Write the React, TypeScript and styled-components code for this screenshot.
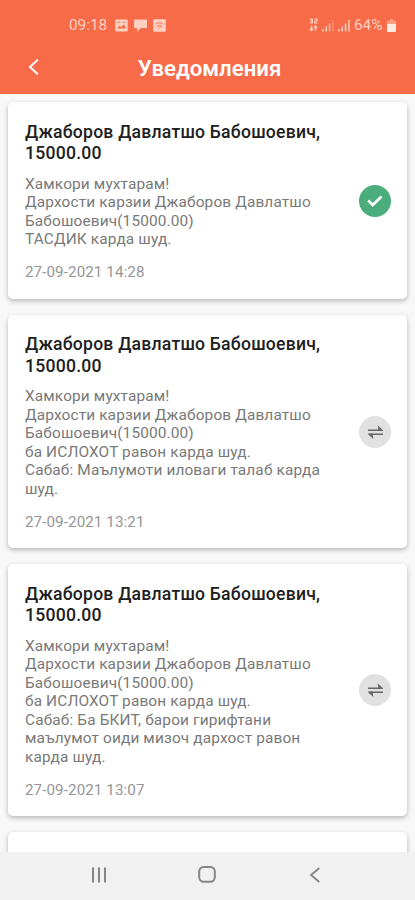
import React from "react";
import styled, { createGlobalStyle } from "styled-components";

const GlobalStyle = createGlobalStyle`
  * { box-sizing: border-box; }
  body { margin: 0; background: #f8f8f8; font-family: Roboto, "Noto Sans", sans-serif; }
`;

const Screen = styled.div`
  width: 415px;
  height: 900px;
  display: flex;
  flex-direction: column;
  overflow: hidden;
  background: #f8f8f8;
`;

const Header = styled.header`
  flex: none;
  height: 94px;
  background: #f76b49;
  color: #fff;
  display: flex;
  flex-direction: column;
`;

const StatusBar = styled.div`
  height: 42px;
  padding: 8px 19px 0 69px;
  display: flex;
  align-items: center;
  justify-content: space-between;
  color: #ffd0c2;
`;

const StatusGroup = styled.div<{ $gap: number }>`
  display: flex;
  align-items: center;
  gap: ${(p) => p.$gap}px;
`;

const StatusText = styled.span<{ $width: number }>`
  width: ${(p) => p.$width}px;
  font-size: 15.3px;
  line-height: 18px;
  white-space: nowrap;
`;

const TitleBar = styled.div`
  height: 50px;
  display: grid;
  grid-template-columns: 66px 1fr 62px;
  align-items: center;
`;

const BackButton = styled.button`
  border: 0;
  padding: 0 0 0 27px;
  background: none;
  color: #fff;
  height: 48px;
  display: flex;
  align-items: center;
`;

const PageTitle = styled.h1`
  margin: 2px 0 0;
  text-align: center;
  font-size: 22.2px;
  line-height: 26px;
  font-weight: 600;
  white-space: nowrap;
`;

const List = styled.main`
  flex: 1;
  min-height: 0;
  overflow: hidden;
  padding: 8px 8px 0;
  display: flex;
  flex-direction: column;
  gap: 16px;
`;

const Card = styled.article<{ $height: number }>`
  flex: none;
  height: ${(p) => p.$height}px;
  padding: 19.500px 16px 0 17px;
  display: flex;
  align-items: stretch;
  justify-content: space-between;
  background: #fff;
  border-radius: 5px;
  box-shadow: 0 2px 5px rgba(0, 0, 0, 0.27);
`;

const Content = styled.div`
  width: 310px;
  white-space: nowrap;
`;

const CardTitle = styled.h2`
  margin: 0 0 10px;
  color: #202020;
  font-size: 17.6px;
  line-height: 21.5px;
  font-weight: 500;
  letter-spacing: 0.23px;
`;

const Line = styled.span`
  display: block;
`;

const Body = styled.p`
  margin: 0 0 14.500px;
  color: #797979;
  font-size: 15.4px;
  line-height: 18.5px;
  letter-spacing: 0.14px;
`;

const DateText = styled.time`
  display: block;
  color: #969696;
  font-size: 15.2px;
  line-height: 19px;
  letter-spacing: 0.08px;
`;

const Status = styled.div<{ $approved: boolean }>`
  align-self: center;
  margin-top: -19px;
  width: 32px;
  height: 32px;
  border-radius: 50%;
  display: grid;
  place-items: center;
  background: ${(p) => (p.$approved ? "#4bad7b" : "#e1e1e1")};
`;

const NavBar = styled.nav`
  flex: none;
  height: 48px;
  background: #f1f1f1;
  color: #858585;
  display: flex;
  align-items: center;
  justify-content: space-between;
  padding: 0 92px 3px 91px;
`;

type Notice = { height: number; lines: string[]; date: string; approved: boolean };

const greeting = ["Хамкори мухтарам!", "Дархости карзии Джаборов Давлатшо", "Бабошоевич(15000.00)"];

const notices: Notice[] = [
  { height: 196.5, approved: true, lines: [...greeting, "ТАСДИК карда шуд."], date: "27-09-2021 14:28" },
  {
    height: 233.5,
    approved: false,
    lines: [...greeting, "ба ИСЛОХОТ равон карда шуд.", "Сабаб: Маълумоти иловаги талаб карда", "шуд."],
    date: "27-09-2021 13:21",
  },
  {
    height: 251.5,
    approved: false,
    lines: [
      ...greeting,
      "ба ИСЛОХОТ равон карда шуд.",
      "Сабаб: Ба БКИТ, барои гирифтани",
      "маълумот оиди мизоч дархост равон",
      "карда шуд.",
    ],
    date: "27-09-2021 13:07",
  },
];

const PhotoIcon = () => (
  <svg width="13" height="13" viewBox="0 0 13 13">
    <rect x=".3" y=".5" width="12.4" height="12" rx="1" fill="currentColor" />
    <path d="M2 9.5 4.5 6.5 6.3 8.3 8.8 5.2 11.2 9.5Z" fill="#f76b49" />
    <path d="M2.3 3.2h3M8 3.5h2" stroke="#f76b49" />
  </svg>
);

const ChatIcon = () => (
  <svg width="13" height="13" viewBox="0 0 13 13">
    <path d="M1 0.5h11a1 1 0 0 1 1 1V8a1 1 0 0 1-1 1H7L3 13V9H1a1 1 0 0 1-1-1V1.500a1 1 0 0 1 1-1Z" fill="currentColor" />
  </svg>
);

const CastIcon = () => (
  <svg width="13" height="13" viewBox="0 0 13 13">
    <rect x=".2" y=".3" width="12.6" height="12.4" rx="1.2" fill="currentColor" />
    <path d="M2.5 5.2Q6.5 2 10.500 5.200M4.300 7Q6.500 5.300 8.700 7L6.500 9.200Z" fill="none" stroke="#f76b49" strokeWidth=".9" />
  </svg>
);

const DataIcon = () => (
  <svg width="9" height="14" viewBox="0 0 9 14" fill="none" stroke="currentColor">
    <path d="M.8 1h2.500v4H.8M1 3h2M5.500 1h2.500v2H5.700v2H8.500" strokeWidth="1.200" />
    <path d="M2.500 7.500v5M.8 10.800l1.700 1.700 1.500-1.700M6.500 13V8M4.900 9.700 6.500 8l1.700 1.700" strokeWidth="1.300" />
  </svg>
);

const SignalIcon = ({ weak }: { weak?: boolean }) => (
  <svg width="12" height="13" viewBox="0 0 12 13" stroke="currentColor" strokeWidth="1.6">
    <path d="M1 10v2.500M4.300 7.500v5" />
    <path d="M7.600 4.500v8" opacity={weak ? 0.75 : 1} />
    <path d="M10.900 1v11.500" opacity={weak ? 0.35 : 0.9} />
  </svg>
);

const BatteryIcon = () => (
  <svg width="9" height="13" viewBox="0 0 9 13">
    <path d="M3 0h3v1.500h2a1 1 0 0 1 1 1V5H0V2.500a1 1 0 0 1 1-1h2Z" fill="currentColor" opacity=".5" />
    <path d="M0 5h9v7a1 1 0 0 1-1 1H1a1 1 0 0 1-1-1Z" fill="#ffeae4" />
  </svg>
);

const CheckIcon = () => (
  <svg width="18" height="14" viewBox="0 0 18 14" fill="none" stroke="#fff" strokeWidth="2.700">
    <path d="m2.200 6.500 4.500 4.500 8.800-8.500" />
  </svg>
);

const ExchangeIcon = () => (
  <svg width="17" height="16" viewBox="0 0 17 16" fill="none" stroke="#666" strokeWidth="1.600">
    <path d="M1 6.200h13.500M16 10.200H2.500" />
    <path d="M10.700 1.500 16 6.200v.8h-4.500ZM6.300 14.900 1 10.200v-.8h4.500Z" fill="#666" stroke="none" />
  </svg>
);

export default function App() {
  return (
    <>
      <GlobalStyle />
      <Screen>
        <Header>
          <StatusBar>
            <StatusGroup $gap={6}>
              <StatusText $width={40}>09:18</StatusText>
              <PhotoIcon />
              <ChatIcon />
              <CastIcon />
            </StatusGroup>
            <StatusGroup $gap={4}>
              <DataIcon />
              <SignalIcon weak />
              <SignalIcon />
              <StatusText $width={29}>64%</StatusText>
              <BatteryIcon />
            </StatusGroup>
          </StatusBar>
          <TitleBar>
            <BackButton aria-label="Назад">
              <svg width="13" height="18" viewBox="0 0 13 18" fill="none" stroke="currentColor" strokeWidth="2">
                <path d="M10.800 1.800 3 9l7.800 7.200" />
              </svg>
            </BackButton>
            <PageTitle>Уведомления</PageTitle>
          </TitleBar>
        </Header>
        <List>
          {notices.map((n) => (
            <Card key={n.date} $height={n.height}>
              <Content>
                <CardTitle>
                  <Line>Джаборов Давлатшо Бабошоевич,</Line>
                  <Line>15000.00</Line>
                </CardTitle>
                <Body>
                  {n.lines.map((line) => (
                    <Line key={line}>{line}</Line>
                  ))}
                </Body>
                <DateText>{n.date}</DateText>
              </Content>
              <Status $approved={n.approved}>{n.approved ? <CheckIcon /> : <ExchangeIcon />}</Status>
            </Card>
          ))}
          <Card $height={100} />
        </List>
        <NavBar>
          <svg width="16" height="16" viewBox="0 0 16 16" stroke="currentColor" strokeWidth="2">
            <path d="M2 .5v15M8 .5v15M14 .5v15" />
          </svg>
          <svg width="18" height="17" viewBox="0 0 18 17" fill="none" stroke="currentColor" strokeWidth="2">
            <rect x="1.200" y="1" width="15.600" height="14.800" rx="4.500" />
          </svg>
          <svg width="16" height="16" viewBox="0 0 16 16" fill="none" stroke="currentColor" strokeWidth="1.800">
            <path d="M12.300 1 4 8l8.300 7" />
          </svg>
        </NavBar>
      </Screen>
    </>
  );
}
